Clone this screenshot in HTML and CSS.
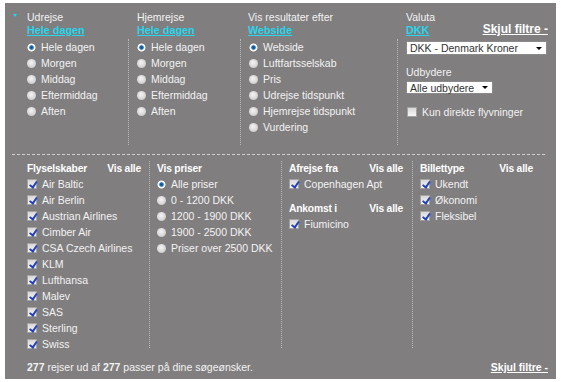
FILE: index.html
```html
<!DOCTYPE html>
<html lang="da">

<head>
    <meta charset="UTF-8">
    <meta name="viewport" content="width=device-width, initial-scale=1.0">
    <title>Filtre</title>
    <link rel="stylesheet" href="styles.css">
</head>

<body>
    <div class="panel">
        <div class="top">
            <div class="toggle"><span class="arrow"></span></div>

            <div class="tcol c1">
                <div class="thead">
                    <div>Udrejse</div>
                    <a class="link" href="#">Hele dagen</a>
                </div>
                <div class="tbody">
                    <div class="opt"><span class="radio on"></span>Hele dagen</div>
                    <div class="opt"><span class="radio"></span>Morgen</div>
                    <div class="opt"><span class="radio"></span>Middag</div>
                    <div class="opt"><span class="radio"></span>Eftermiddag</div>
                    <div class="opt"><span class="radio"></span>Aften</div>
                </div>
            </div>

            <div class="tcol c2">
                <div class="thead">
                    <div>Hjemrejse</div>
                    <a class="link" href="#">Hele dagen</a>
                </div>
                <div class="tbody">
                    <div class="opt"><span class="radio on"></span>Hele dagen</div>
                    <div class="opt"><span class="radio"></span>Morgen</div>
                    <div class="opt"><span class="radio"></span>Middag</div>
                    <div class="opt"><span class="radio"></span>Eftermiddag</div>
                    <div class="opt"><span class="radio"></span>Aften</div>
                </div>
            </div>

            <div class="tcol c3">
                <div class="thead">
                    <div>Vis resultater efter</div>
                    <a class="link" href="#">Webside</a>
                </div>
                <div class="tbody">
                    <div class="opt"><span class="radio on"></span>Webside</div>
                    <div class="opt"><span class="radio"></span>Luftfartsselskab</div>
                    <div class="opt"><span class="radio"></span>Pris</div>
                    <div class="opt"><span class="radio"></span>Udrejse tidspunkt</div>
                    <div class="opt"><span class="radio"></span>Hjemrejse tidspunkt</div>
                    <div class="opt"><span class="radio"></span>Vurdering</div>
                </div>
            </div>

            <div class="tcol c4">
                <div class="thead">
                    <div>Valuta</div>
                    <div class="head-row">
                        <a class="link" href="#">DKK</a>
                        <a class="hide big" href="#">Skjul filtre -</a>
                    </div>
                </div>
                <div class="tbody">
                    <div class="select wide"><span>DKK - Denmark Kroner</span><span class="caret"></span></div>
                    <div class="label">Udbydere</div>
                    <div class="select small"><span>Alle udbydere</span><span class="caret"></span></div>
                    <div class="opt direct"><span class="cb"></span>Kun direkte flyvninger</div>
                </div>
            </div>
        </div>

        <div class="divider"></div>

        <div class="bottom">
            <div class="bcol b1">
                <div class="bhead"><span>Flyselskaber</span><span>Vis alle</span></div>
                <div class="opt"><span class="cb on"></span>Air Baltic</div>
                <div class="opt"><span class="cb on"></span>Air Berlin</div>
                <div class="opt"><span class="cb on"></span>Austrian Airlines</div>
                <div class="opt"><span class="cb on"></span>Cimber Air</div>
                <div class="opt"><span class="cb on"></span>CSA Czech Airlines</div>
                <div class="opt"><span class="cb on"></span>KLM</div>
                <div class="opt"><span class="cb on"></span>Lufthansa</div>
                <div class="opt"><span class="cb on"></span>Malev</div>
                <div class="opt"><span class="cb on"></span>SAS</div>
                <div class="opt"><span class="cb on"></span>Sterling</div>
                <div class="opt"><span class="cb on"></span>Swiss</div>
            </div>

            <div class="bcol b2">
                <div class="bhead"><span>Vis priser</span></div>
                <div class="opt"><span class="radio on"></span>Alle priser</div>
                <div class="opt"><span class="radio"></span>0 - 1200 DKK</div>
                <div class="opt"><span class="radio"></span>1200 - 1900 DKK</div>
                <div class="opt"><span class="radio"></span>1900 - 2500 DKK</div>
                <div class="opt"><span class="radio"></span>Priser over 2500 DKK</div>
            </div>

            <div class="bcol b3">
                <div class="bhead"><span>Afrejse fra</span><span>Vis alle</span></div>
                <div class="opt"><span class="cb on"></span>Copenhagen Apt</div>
                <div class="bhead second"><span>Ankomst i</span><span>Vis alle</span></div>
                <div class="opt"><span class="cb on"></span>Fiumicino</div>
            </div>

            <div class="bcol b4">
                <div class="bhead"><span>Billettype</span><span>Vis alle</span></div>
                <div class="opt"><span class="cb on"></span>Ukendt</div>
                <div class="opt"><span class="cb on"></span>Økonomi</div>
                <div class="opt"><span class="cb on"></span>Fleksibel</div>
            </div>
        </div>

        <div class="foot">
            <div><b>277</b> rejser ud af <b>277</b> passer på dine søgeønsker.</div>
            <a class="hide" href="#">Skjul filtre -</a>
        </div>
    </div>
</body>

</html>
```

FILE: styles.css
```css
* {
    box-sizing: border-box;
}

body {
    margin: 0;
    background-color: #ffffff;
    font-family: "Liberation Sans", Arial, sans-serif;
    font-size: 10.5px;
    color: #f3f3f3;
}

.panel {
    margin: 3px 0 0 5px;
    width: 551px;
    height: 376px;
    padding: 8px 8px 0 8px;
    background-color: #807e7f;
}

/* top part */
.top {
    display: flex;
    height: 134px;
}

.toggle {
    width: 14px;
    padding-top: 3px;
}

.arrow {
    display: block;
    width: 0;
    height: 0;
    border-left: 2.5px solid transparent;
    border-right: 2.5px solid transparent;
    border-top: 3px solid #25d6ec;
}

.tcol {
    display: flex;
    flex-direction: column;
}

.c1 {
    width: 101px;
}

.c2 {
    width: 112px;
}

.c3 {
    width: 157px;
}

.c4 {
    width: 151px;
}

.thead {
    height: 26px;
    line-height: 13px;
}

.c2 .thead,
.c4 .thead {
    padding-left: 9px;
}

.c3 .thead {
    padding-left: 8px;
}

.tbody {
    flex: 1;
    margin-top: 2px;
}

.c2 .tbody,
.c3 .tbody,
.c4 .tbody {
    border-left: 1px dotted #b9b9b9;
    padding-left: 8px;
}

.link {
    color: #25d6ec;
    font-weight: bold;
    font-size: 10.8px;
    text-decoration: underline;
}

.head-row {
    display: flex;
    justify-content: space-between;
    align-items: center;
}

.hide {
    color: #ffffff;
    font-weight: bold;
    font-size: 10.5px;
    text-decoration: underline;
}

.hide.big {
    font-size: 12px;
    margin-top: -2px;
}

.opt {
    display: flex;
    align-items: center;
    height: 16px;
    white-space: nowrap;
}

.radio {
    width: 9px;
    height: 9px;
    margin-right: 5px;
    border-radius: 50%;
    background: radial-gradient(circle at 45% 40%, #f4f4f4 0, #d6d6d6 60%, #b4b4b4 100%);
    flex-shrink: 0;
}

.radio.on {
    background: radial-gradient(circle, #0f4e8c 0, #1b6db5 1.8px, #e7eef6 2.6px, #ffffff 3.6px, #777 4.5px);
}

.cb {
    position: relative;
    width: 10px;
    height: 10px;
    margin-right: 5px;
    background: linear-gradient(#d8d8d8, #f7f7f7);
    border: 1px solid #a3a3a3;
    flex-shrink: 0;
}

.cb.on::after {
    content: '';
    position: absolute;
    left: 2.5px;
    top: 0px;
    width: 3px;
    height: 5.5px;
    border: solid #2440b4;
    border-width: 0 2px 2px 0;
    transform: rotate(35deg);
}

.select {
    display: flex;
    justify-content: space-between;
    align-items: center;
    background-color: #ffffff;
    border: 1px solid #8a8a8a;
    color: #333333;
    padding: 0 4px 0 3px;
}

.select.wide {
    width: 141px;
    height: 14px;
    margin-top: 2px;
}

.select.small {
    width: 87px;
    height: 13px;
    margin-top: 2px;
}

.caret {
    width: 0;
    height: 0;
    border-left: 3px solid transparent;
    border-right: 3px solid transparent;
    border-top: 3.5px solid #000000;
}

.label {
    margin-top: 11px;
    line-height: 13px;
}

.direct {
    margin-top: 10px;
}

.direct .cb {
    margin-left: 1px;
}

/* dashed line */
.divider {
    margin: 9px 3px 0 -1px;
    border-top: 1px dashed #cfcfcf;
}

/* bottom part */
.bottom {
    display: flex;
    height: 187px;
    margin-top: 6px;
}

.bcol {
    padding-top: 1px;
}

.b1 {
    width: 136px;
    padding-left: 14px;
    padding-right: 8px;
}

.b2 {
    width: 132px;
    padding-left: 7px;
    padding-right: 8px;
    border-left: 1px dotted #b9b9b9;
}

.b3 {
    width: 131px;
    padding-left: 7px;
    padding-right: 9px;
    border-left: 1px dotted #b9b9b9;
}

.b4 {
    width: 136px;
    padding-left: 7px;
    padding-right: 15px;
    border-left: 1px dotted #b9b9b9;
}

.bhead {
    display: flex;
    justify-content: space-between;
    height: 14px;
    line-height: 14px;
    font-size: 10.3px;
    font-weight: bold;
    letter-spacing: -0.2px;
    color: #ffffff;
}

.bhead.second {
    margin-top: 10px;
}

.foot {
    display: flex;
    justify-content: space-between;
    align-items: center;
    margin-top: 12px;
    padding-left: 14px;
    line-height: 14px;
}
```
